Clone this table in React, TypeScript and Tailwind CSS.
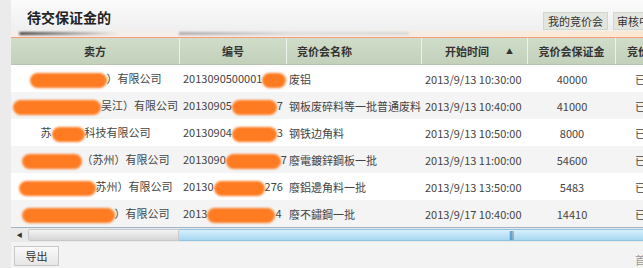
const cjk = "font-['Noto_Sans_CJK_SC','Liberation_Sans',sans-serif]";

const Blob = ({ w }: { w: number }) => (
  <span
    className="inline-block h-[15px] rounded-full bg-[#ff7b22] blur-[1.2px] align-middle"
    style={{ width: w }}
  />
);

type Row = {
  seller: React.ReactNode;
  code: React.ReactNode;
  name: string;
  time: string;
  deposit: string;
};

const rows: Row[] = [
  {
    seller: (<><Blob w={77} />）有限公司</>),
    code: (<>2013090500001<Blob w={24} /></>),
    name: "废铝",
    time: "2013/9/13 10:30:00",
    deposit: "40000",
  },
  {
    seller: (<><Blob w={88} />吴江）有限公司</>),
    code: (<>20130905<Blob w={45} />7</>),
    name: "钢板废碎料等一批普通废料",
    time: "2013/9/13 10:40:00",
    deposit: "41000",
  },
  {
    seller: (<>苏<Blob w={33} />科技有限公司</>),
    code: (<>20130904<Blob w={45} />3</>),
    name: "钢铁边角料",
    time: "2013/9/13 10:50:00",
    deposit: "8000",
  },
  {
    seller: (<><Blob w={60} />（苏州）有限公司</>),
    code: (<>2013090<Blob w={55} />7</>),
    name: "廢電鍍鋅鋼板一批",
    time: "2013/9/13 11:00:00",
    deposit: "54600",
  },
  {
    seller: (<><Blob w={77} />苏州）有限公司</>),
    code: (<>20130<Blob w={51} />276</>),
    name: "廢鋁邊角料一批",
    time: "2013/9/13 13:50:00",
    deposit: "5483",
  },
  {
    seller: (<><Blob w={93} />）有限公司</>),
    code: (<>2013<Blob w={68} />4</>),
    name: "廢不鏽鋼一批",
    time: "2013/9/17 10:40:00",
    deposit: "14410",
  },
];

export default function App() {
  return (
    <div className={`flex w-[643px] h-[268px] overflow-hidden bg-[#f3f3f3] ${cjk}`}>
      <div className="w-[11px] shrink-0 bg-[#ebebeb]" />
      <div className="flex flex-col w-[632px] shrink-0">
        {/* title bar */}
        <div className="flex h-[33px] items-end justify-between bg-gradient-to-b from-[#fbfbfb] to-[#efefef]">
          <div className="pl-[16px] pb-[5px] text-[14px] font-bold leading-[18px] text-[#222]">
            待交保证金的
          </div>
          <div className="flex gap-[5px] pb-[1px]">
            <button className="h-[18px] w-[65px] border border-[#d2d6cc] bg-[#e3e6df] text-[11px] leading-[16px] text-[#333]">
              我的竞价会
            </button>
            <button className="h-[18px] w-[30px] overflow-hidden whitespace-nowrap pl-[3px] text-left border-y border-l border-[#d2d6cc] bg-[#e3e6df] text-[11px] leading-[16px] text-[#333]">
              审核中
            </button>
          </div>
        </div>
        {/* shadow band */}
        <div className="flex h-[6px] bg-gradient-to-r from-[#f7eee9] via-[#f5eeea] to-[#fbe8d2]">
          <div className="mt-[1px] h-[3px] w-[100px] ml-[8px] rounded-full bg-gradient-to-r from-[#444] via-[#999] to-transparent blur-[1px]" />
          <div className="mt-[1px] h-[3px] w-[230px] ml-[60px] bg-gradient-to-r from-[#aaa] via-[#ddd] to-[#d8d8d8] blur-[1px]" />
        </div>
        <div className="h-[2px] bg-[#f99c7c]" />
        {/* header */}
        <div className="flex h-[27px] whitespace-nowrap bg-gradient-to-b from-[#d0ddc9] to-[#c3d1bb] text-[11px] font-bold text-[#333] leading-[27px] border-b border-[#b7c4b0]">
          <div className="w-[169px] text-center border-r border-[#eef2ec]">卖方</div>
          <div className="w-[107px] text-center border-r border-[#eef2ec]">编号</div>
          <div className="w-[135px] pl-[10px] border-r border-[#eef2ec]">竞价会名称</div>
          <div className="w-[106px] flex pl-[23px] gap-[17px] border-r border-[#eef2ec]">
            <span>开始时间</span>
            <span className="text-[7px]">▲</span>
          </div>
          <div className="w-[88px] text-center border-r border-[#eef2ec]">竞价会保证金</div>
          <div className="flex-1 pl-[11px] overflow-hidden">竞价会状态</div>
        </div>
        {/* body */}
        <div className="flex flex-col text-[11px] text-[#444]">
          {rows.map((r, i) => (
            <div
              key={i}
              className={`flex h-[27px] items-center whitespace-nowrap ${i % 2 === 0 ? "bg-white" : "bg-[#f4f4f4]"}`}
            >
              <div className="w-[169px] text-center">{r.seller}</div>
              <div className="w-[107px] pl-[3px]">{r.code}</div>
              <div className="w-[135px] pl-[2px]">{r.name}</div>
              <div className="w-[106px] pl-[3px]">{r.time}</div>
              <div className="w-[88px] text-center">{r.deposit}</div>
              <div className="flex-1 pl-[19px] overflow-hidden">已</div>
            </div>
          ))}
        </div>
        {/* scrollbar */}
        <div className="flex h-[15px] border-t border-[#9fb4c6] bg-[#e9e9e9]">
          <div className="w-[17px] flex items-center justify-center text-[6px] text-[#333]">◀</div>
          <div className="w-[151px] my-[1px] rounded-l-[2px] border border-[#c9c9c9] bg-gradient-to-b from-[#f4f4f4] to-[#d6d6d6]" />
          <div className="flex-1 my-[1px] flex items-center justify-center bg-gradient-to-b from-[#d9f0fb] via-[#bfe4f7] to-[#a7d7f1] border-y border-[#8fc5e3]">
            <span className="ml-[200px] text-[8px] font-bold leading-none text-[#3d7eaa] tracking-[-1px]">|||</span>
          </div>
        </div>
        {/* footer */}
        <div className="flex flex-1 items-start justify-between pt-[4px] pl-[3px]">
          <button className="h-[20px] w-[45px] border border-[#c8c8c8] bg-gradient-to-b from-[#fafafa] to-[#e6e6e6] text-[11px] text-[#333] leading-[18px]">
            导出
          </button>
          <span className="mt-[6px] w-[8px] overflow-hidden whitespace-nowrap text-[11px] text-[#999]">首页</span>
        </div>
      </div>
    </div>
  );
}
